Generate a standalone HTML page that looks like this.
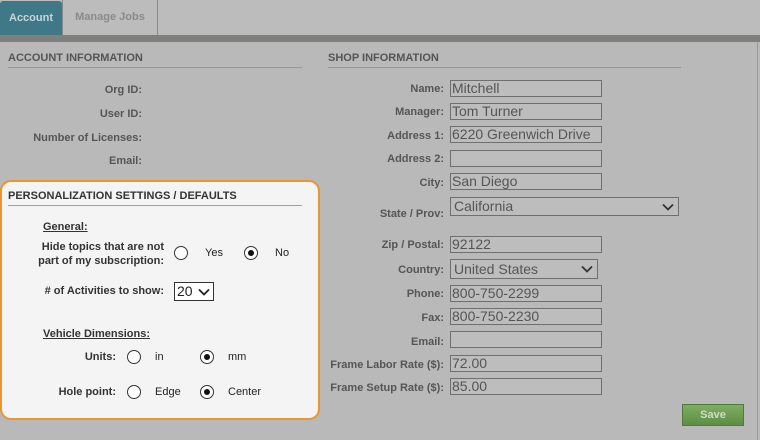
<!DOCTYPE html>
<html><head><style>
body{margin:0;width:760px;height:440px;background:#b9b9b9;font-family:"Liberation Sans",Arial,sans-serif;position:relative;overflow:hidden}
.a{position:absolute}
.lbl{position:absolute;font-size:11px;font-weight:bold;color:#555;text-align:right;white-space:nowrap;margin-top:1px}
.h{position:absolute;font-size:11px;font-weight:bold;color:#555;border-bottom:1px solid #8a9cac;padding-bottom:3px}
.in{position:absolute;left:450px;width:149px;height:15px;border:1px solid #6f6f6f;background:#bdbdbd;font-size:14px;color:#555;line-height:15px;padding-left:1px}
.sel{position:absolute;border:1px solid #6f6f6f;background:#bdbdbd;font-size:14px;color:#555;padding-left:3px}
.chev{position:absolute;right:4px;top:3px;width:12px;height:8px}
.r{position:absolute;width:12px;height:12px;border:1px solid #333;border-radius:50%;background:#fff;margin-top:-1px}
.r.on::after{content:"";position:absolute;left:3px;top:3px;width:6px;height:6px;border-radius:50%;background:#111}
.t{position:absolute;font-size:11px;color:#222;font-weight:normal}
.b{position:absolute;font-size:11px;font-weight:bold;color:#333;text-align:right;white-space:nowrap}
</style></head><body>
<div class="a" style="left:0;top:0;width:760px;height:35px;background:#bcbcbc"></div>
<div class="a" style="left:0;top:1px;width:62px;height:34px;background:#3f7886;border-radius:3px 3px 0 0;color:#c9d6da;font-size:11px;font-weight:bold;line-height:34px;text-align:center">Account</div>
<div class="a" style="left:62px;top:0;width:96px;height:35px;border-right:1px solid #8a8a8a;border-left:1px solid #8a8a8a;color:#8a8a8a;font-size:11px;font-weight:bold;line-height:35px;text-align:center;box-sizing:border-box">Manage Jobs</div>
<div class="a" style="left:0;top:35px;width:760px;height:7px;background:#7f7f7d"></div>
<div class="a" style="left:757px;top:42px;width:1px;height:398px;background:#9a9a9a"></div>

<div class="h" style="left:8px;top:52px;width:294px">ACCOUNT INFORMATION</div>
<div class="h" style="left:328px;top:52px;width:353px">SHOP INFORMATION</div>

<div class="lbl" style="right:618px;top:83px">Org ID:</div>
<div class="lbl" style="right:618px;top:107px">User ID:</div>
<div class="lbl" style="right:618px;top:131px">Number of Licenses:</div>
<div class="lbl" style="right:618px;top:154px">Email:</div>

<div class="lbl" style="right:316px;top:82px">Name:</div><div class="in" style="top:80px">Mitchell</div>
<div class="lbl" style="right:316px;top:105px">Manager:</div><div class="in" style="top:103px">Tom Turner</div>
<div class="lbl" style="right:316px;top:129px">Address 1:</div><div class="in" style="top:126px">6220 Greenwich Drive</div>
<div class="lbl" style="right:316px;top:152px">Address 2:</div><div class="in" style="top:150px"></div>
<div class="lbl" style="right:316px;top:176px">City:</div><div class="in" style="top:173px">San Diego</div>
<div class="lbl" style="right:316px;top:207px">State / Prov:</div>
<div class="sel" style="left:450px;top:197px;width:224px;height:17px;line-height:17px">California<svg class="chev" viewBox="0 0 12 8" style="top:5px"><path d="M1 1.5L6 6.5L11 1.5" stroke="#333" stroke-width="1.8" fill="none"/></svg></div>
<div class="lbl" style="right:316px;top:238px">Zip / Postal:</div><div class="in" style="top:236px">92122</div>
<div class="lbl" style="right:316px;top:263px">Country:</div>
<div class="sel" style="left:450px;top:259px;width:143px;height:18px;line-height:18px">United States<svg class="chev" viewBox="0 0 12 8" style="top:5px"><path d="M1 1.5L6 6.5L11 1.5" stroke="#333" stroke-width="1.8" fill="none"/></svg></div>
<div class="lbl" style="right:316px;top:287px">Phone:</div><div class="in" style="top:285px">800-750-2299</div>
<div class="lbl" style="right:316px;top:311px">Fax:</div><div class="in" style="top:308px">800-750-2230</div>
<div class="lbl" style="right:316px;top:335px">Email:</div><div class="in" style="top:331px"></div>
<div class="lbl" style="right:316px;top:358px">Frame Labor Rate ($):</div><div class="in" style="top:355px">72.00</div>
<div class="lbl" style="right:316px;top:381px">Frame Setup Rate ($):</div><div class="in" style="top:378px">85.00</div>
<div class="a" style="left:682px;top:404px;width:60px;height:20px;border:1px solid #4e7a3a;background:linear-gradient(#7fae62,#5e8d45);color:#cfdcc8;font-size:11px;font-weight:bold;text-align:center;line-height:20px">Save</div>

<div class="a" style="left:0;top:180px;width:316px;height:236px;border:2px solid #e8962e;border-radius:11px;background:#f4f4f4"></div>
<div class="h" style="left:8px;top:190px;width:294px;color:#333;border-color:#8fa4b8">PERSONALIZATION SETTINGS / DEFAULTS</div>
<div class="b" style="left:43px;top:221px;text-decoration:underline;color:#333">General:</div>
<div class="b" style="right:596px;top:240px;line-height:14px">Hide topics that are not<br>part of my subscription:</div>
<div class="r" style="left:174px;top:247px"></div><div class="t" style="left:205px;top:247px">Yes</div>
<div class="r on" style="left:244px;top:247px"></div><div class="t" style="left:275px;top:247px">No</div>
<div class="b" style="right:596px;top:285px">#  of Activities to show:</div>
<div class="sel" style="left:174px;top:282px;width:36px;height:17px;line-height:17px;border-color:#333;background:#fff;color:#222;padding-left:2px">20<svg class="chev" viewBox="0 0 12 8" style="top:5px;right:3px"><path d="M1 1.5L6 6.5L11 1.5" stroke="#222" stroke-width="1.8" fill="none"/></svg></div>
<div class="b" style="left:43px;top:328px;text-decoration:underline">Vehicle Dimensions:</div>
<div class="b" style="right:644px;top:351px">Units:</div>
<div class="r" style="left:127px;top:351px"></div><div class="t" style="left:155px;top:351px">in</div>
<div class="r on" style="left:200px;top:351px"></div><div class="t" style="left:228px;top:351px">mm</div>
<div class="b" style="right:644px;top:386px">Hole point:</div>
<div class="r" style="left:127px;top:386px"></div><div class="t" style="left:155px;top:386px">Edge</div>
<div class="r on" style="left:200px;top:386px"></div><div class="t" style="left:228px;top:386px">Center</div>
</body></html>
